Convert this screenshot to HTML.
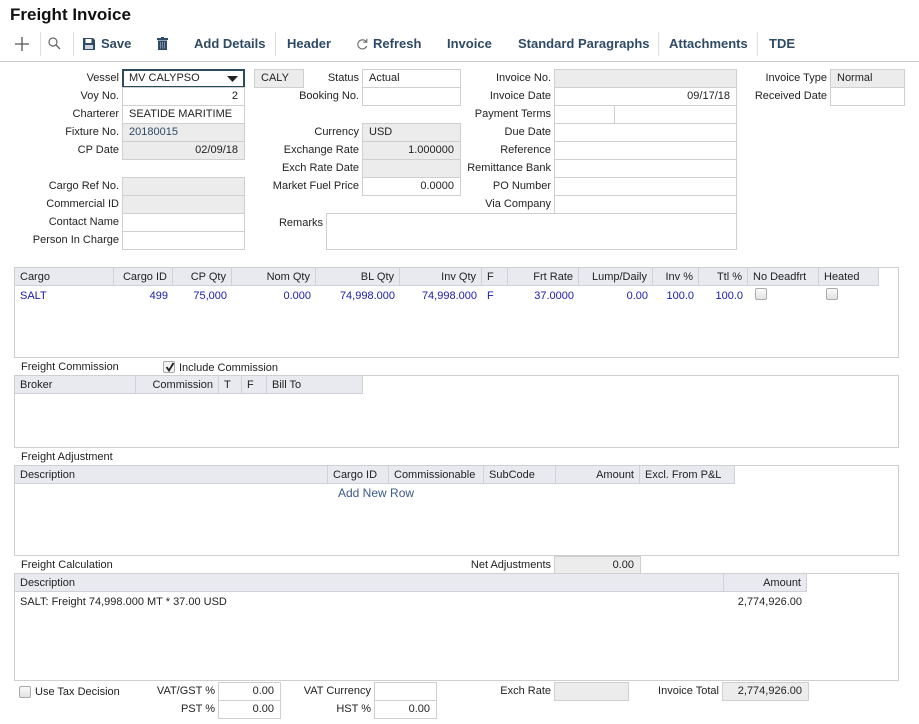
<!DOCTYPE html>
<html><head><meta charset="utf-8"><style>
*{box-sizing:border-box;margin:0;padding:0}
body{width:919px;height:724px;background:#fff;font-family:"Liberation Sans",Arial,sans-serif;font-size:11px;color:#222;position:relative;overflow:hidden}
.a{position:absolute;white-space:nowrap}
.l{position:absolute;text-align:right;white-space:nowrap;line-height:19px}
.b{position:absolute;border:1px solid #cfcfcf;background:#fff;height:19px;line-height:17px;padding:0 6px;white-space:nowrap}
.g{background:#ececec}
.r{text-align:right}
.tb{position:absolute;top:36px;font-size:13px;font-weight:bold;color:#2f4a66;white-space:nowrap}
.sep{position:absolute;top:32px;width:1px;height:24px;background:#ddd}
.grid{position:absolute;border:1px solid #cfcfcf;background:#fff}
.hd{position:absolute;top:0;height:18px;background:#e8eaf0;border-bottom:1px solid #d0d0d8;line-height:18px;border-right:1px solid #cfd0d8;padding:0 5px;white-space:nowrap}
.cell{position:absolute;line-height:16px;color:#1a1aa6;white-space:nowrap;padding:0 5px}
.cb{position:absolute;width:12px;height:12px;border:1px solid #aaa;border-radius:2px;background:linear-gradient(#fafafa,#e2e2e2)}
</style></head><body>
<div class="a" style="left:10px;top:5px;font-size:17px;font-weight:bold;color:#111">Freight Invoice</div>

<svg class="a" style="left:15px;top:37px" width="14" height="14"><path d="M7 0V14M0 7H14" stroke="#555" stroke-width="1.3"/></svg>
<div class="sep" style="left:40px"></div>
<svg class="a" style="left:48px;top:37px" width="13" height="13"><circle cx="5" cy="5" r="4" fill="none" stroke="#666" stroke-width="1.2"/><path d="M8 8L12 12" stroke="#666" stroke-width="1.4"/></svg>
<div class="sep" style="left:73px"></div>
<svg class="a" style="left:83px;top:38px" width="12" height="12"><path d="M0 0H10L12 2V12H0Z" fill="#2f4a66"/><rect x="2.5" y="1" width="6" height="4" fill="#fff"/><rect x="2" y="7" width="8" height="4" fill="#cfd6de"/></svg>
<div class="tb" style="left:101px">Save</div>
<svg class="a" style="left:157px;top:37px" width="11" height="13"><rect x="0" y="1" width="11" height="2" fill="#2f4a66"/><rect x="4" y="0" width="3" height="1.5" fill="#2f4a66"/><rect x="1" y="3.5" width="9" height="9.5" fill="#2f4a66"/><path d="M3.5 5V11.5M5.5 5V11.5M7.5 5V11.5" stroke="#8aa0b5" stroke-width="0.8"/></svg>
<div class="tb" style="left:194px">Add Details</div>
<div class="sep" style="left:275px"></div>
<div class="tb" style="left:287px">Header</div>
<svg class="a" style="left:356px;top:38px" width="12" height="12"><path d="M10 3.5A4.6 4.6 0 1 0 10.7 8" fill="none" stroke="#666" stroke-width="1.1"/><path d="M10.8 0.8V4.2H7.4" fill="none" stroke="#666" stroke-width="1.1"/></svg>
<div class="tb" style="left:373px">Refresh</div>
<div class="tb" style="left:447px">Invoice</div>
<div class="tb" style="left:518px">Standard Paragraphs</div>
<div class="sep" style="left:658px"></div>
<div class="tb" style="left:669px">Attachments</div>
<div class="sep" style="left:757px"></div>
<div class="tb" style="left:769px">TDE</div>
<div class="a" style="left:0;top:61px;width:919px;height:1px;background:#c8c8c8"></div>

<div class="l" style="right:800px;top:69px">Vessel</div>
<div class="b" style="left:122px;top:69px;width:123px;border:2px solid #2b4a5c;line-height:15px;padding:0 5px">MV CALYPSO<svg style="position:absolute;right:5px;top:5px" width="11" height="6"><path d="M0 0H11L5.5 6Z" fill="#222"/></svg></div>
<div class="l" style="right:800px;top:87px">Voy No.</div>
<div class="b r" style="left:122px;top:87px;width:123px">2</div>
<div class="l" style="right:800px;top:105px">Charterer</div>
<div class="b" style="left:122px;top:105px;width:123px">SEATIDE MARITIME</div>
<div class="l" style="right:800px;top:123px">Fixture No.</div>
<div class="b g" style="left:122px;top:123px;width:123px;color:#2f4a66">20180015</div>
<div class="l" style="right:800px;top:141px">CP Date</div>
<div class="b g r" style="left:122px;top:141px;width:123px">02/09/18</div>
<div class="l" style="right:800px;top:177px">Cargo Ref No.</div>
<div class="b g" style="left:122px;top:177px;width:123px"></div>
<div class="l" style="right:800px;top:195px">Commercial ID</div>
<div class="b g" style="left:122px;top:195px;width:123px"></div>
<div class="l" style="right:800px;top:213px">Contact Name</div>
<div class="b" style="left:122px;top:213px;width:123px"></div>
<div class="l" style="right:800px;top:231px">Person In Charge</div>
<div class="b" style="left:122px;top:231px;width:123px"></div>

<div class="b g" style="left:254px;top:69px;width:50px">CALY</div>
<div class="l" style="right:560px;top:69px">Status</div>
<div class="b" style="left:362px;top:69px;width:99px">Actual</div>
<div class="l" style="right:560px;top:87px">Booking No.</div>
<div class="b" style="left:362px;top:87px;width:99px"></div>
<div class="l" style="right:560px;top:123px">Currency</div>
<div class="b g" style="left:362px;top:123px;width:99px">USD</div>
<div class="l" style="right:560px;top:141px">Exchange Rate</div>
<div class="b g r" style="left:362px;top:141px;width:99px">1.000000</div>
<div class="l" style="right:560px;top:159px">Exch Rate Date</div>
<div class="b g" style="left:362px;top:159px;width:99px"></div>
<div class="l" style="right:560px;top:177px">Market Fuel Price</div>
<div class="b r" style="left:362px;top:177px;width:99px">0.0000</div>
<div class="l" style="right:596px;top:214px">Remarks</div>
<div class="b" style="left:326px;top:213px;width:411px;height:37px"></div>

<div class="l" style="right:368px;top:69px">Invoice No.</div>
<div class="b g" style="left:554px;top:69px;width:183px"></div>
<div class="l" style="right:368px;top:87px">Invoice Date</div>
<div class="b r" style="left:554px;top:87px;width:183px">09/17/18</div>
<div class="l" style="right:368px;top:105px">Payment Terms</div>
<div class="b" style="left:554px;top:105px;width:61px"></div>
<div class="b" style="left:614px;top:105px;width:123px"></div>
<div class="l" style="right:368px;top:123px">Due Date</div>
<div class="b" style="left:554px;top:123px;width:183px"></div>
<div class="l" style="right:368px;top:141px">Reference</div>
<div class="b" style="left:554px;top:141px;width:183px"></div>
<div class="l" style="right:368px;top:159px">Remittance Bank</div>
<div class="b" style="left:554px;top:159px;width:183px"></div>
<div class="l" style="right:368px;top:177px">PO Number</div>
<div class="b" style="left:554px;top:177px;width:183px"></div>
<div class="l" style="right:368px;top:195px">Via Company</div>
<div class="b" style="left:554px;top:195px;width:183px"></div>

<div class="l" style="right:92px;top:69px">Invoice Type</div>
<div class="b g" style="left:830px;top:69px;width:75px">Normal</div>
<div class="l" style="right:92px;top:87px">Received Date</div>
<div class="b" style="left:830px;top:87px;width:75px"></div>

<div class="grid" style="left:14px;top:267px;width:885px;height:91px">
<div class="hd" style="left:0;width:99px">Cargo</div>
<div class="hd r" style="left:99px;width:59px">Cargo ID</div>
<div class="hd r" style="left:158px;width:59px">CP Qty</div>
<div class="hd r" style="left:217px;width:84px">Nom Qty</div>
<div class="hd r" style="left:301px;width:84px">BL Qty</div>
<div class="hd r" style="left:385px;width:82px">Inv Qty</div>
<div class="hd" style="left:467px;width:26px">F</div>
<div class="hd r" style="left:493px;width:71px">Frt Rate</div>
<div class="hd r" style="left:564px;width:74px">Lump/Daily</div>
<div class="hd r" style="left:638px;width:46px">Inv %</div>
<div class="hd r" style="left:684px;width:49px">Ttl %</div>
<div class="hd" style="left:733px;width:71px">No Deadfrt</div>
<div class="hd" style="left:804px;width:60px">Heated</div>
<div class="cell" style="left:0;top:20px">SALT</div>
<div class="cell r" style="left:99px;top:20px;width:59px">499</div>
<div class="cell r" style="left:158px;top:20px;width:59px">75,000</div>
<div class="cell r" style="left:217px;top:20px;width:84px">0.000</div>
<div class="cell r" style="left:301px;top:20px;width:84px">74,998.000</div>
<div class="cell r" style="left:385px;top:20px;width:82px">74,998.000</div>
<div class="cell" style="left:467px;top:20px">F</div>
<div class="cell r" style="left:493px;top:20px;width:71px">37.0000</div>
<div class="cell r" style="left:564px;top:20px;width:74px">0.00</div>
<div class="cell r" style="left:638px;top:20px;width:46px">100.0</div>
<div class="cell r" style="left:684px;top:20px;width:49px">100.0</div>
<div class="cb" style="left:740px;top:20px"></div>
<div class="cb" style="left:811px;top:20px"></div>
</div>

<div class="a" style="left:21px;top:361px">Freight Commission</div>
<div class="cb" style="left:163px;top:361px;background:#f4f4f4"><svg style="position:absolute;left:1px;top:0" width="10" height="10"><path d="M1.5 5L4 8.5L8.5 1" fill="none" stroke="#222" stroke-width="1.8"/></svg></div>
<div class="a" style="left:179px;top:362px">Include Commission</div>
<div class="grid" style="left:14px;top:375px;width:885px;height:73px">
<div class="hd" style="left:0;width:121px">Broker</div>
<div class="hd r" style="left:121px;width:83px">Commission</div>
<div class="hd" style="left:204px;width:23px">T</div>
<div class="hd" style="left:227px;width:25px">F</div>
<div class="hd" style="left:252px;width:96px">Bill To</div>
</div>

<div class="a" style="left:21px;top:451px">Freight Adjustment</div>
<div class="grid" style="left:14px;top:465px;width:885px;height:91px">
<div class="hd" style="left:0;width:313px">Description</div>
<div class="hd" style="left:313px;width:61px">Cargo ID</div>
<div class="hd" style="left:374px;width:95px">Commissionable</div>
<div class="hd" style="left:469px;width:72px">SubCode</div>
<div class="hd r" style="left:541px;width:84px">Amount</div>
<div class="hd" style="left:625px;width:95px">Excl. From P&amp;L</div>
<div class="a" style="left:323px;top:20px;font-size:12px;color:#3a5a8a">Add New Row</div>
</div>

<div class="a" style="left:21px;top:559px">Freight Calculation</div>
<div class="l" style="right:368px;top:556px">Net Adjustments</div>
<div class="b g r" style="left:554px;top:556px;width:87px">0.00</div>
<div class="grid" style="left:14px;top:573px;width:885px;height:108px">
<div class="hd" style="left:0;width:709px">Description</div>
<div class="hd r" style="left:709px;width:83px">Amount</div>
<div class="a" style="left:5px;top:22px">SALT: Freight 74,998.000 MT * 37.00 USD</div>
<div class="a" style="left:709px;top:22px;width:78px;text-align:right">2,774,926.00</div>
</div>

<div class="cb" style="left:19px;top:686px"></div>
<div class="a" style="left:35px;top:686px">Use Tax Decision</div>
<div class="l" style="right:704px;top:682px">VAT/GST %</div>
<div class="b r" style="left:218px;top:682px;width:63px">0.00</div>
<div class="l" style="right:548px;top:682px">VAT Currency</div>
<div class="b" style="left:374px;top:682px;width:63px"></div>
<div class="l" style="right:368px;top:682px">Exch Rate</div>
<div class="b g" style="left:554px;top:682px;width:75px"></div>
<div class="l" style="right:200px;top:682px">Invoice Total</div>
<div class="b g r" style="left:722px;top:682px;width:87px">2,774,926.00</div>
<div class="l" style="right:704px;top:700px">PST %</div>
<div class="b r" style="left:218px;top:700px;width:63px">0.00</div>
<div class="l" style="right:548px;top:700px">HST %</div>
<div class="b r" style="left:374px;top:700px;width:63px">0.00</div>
</body></html>
